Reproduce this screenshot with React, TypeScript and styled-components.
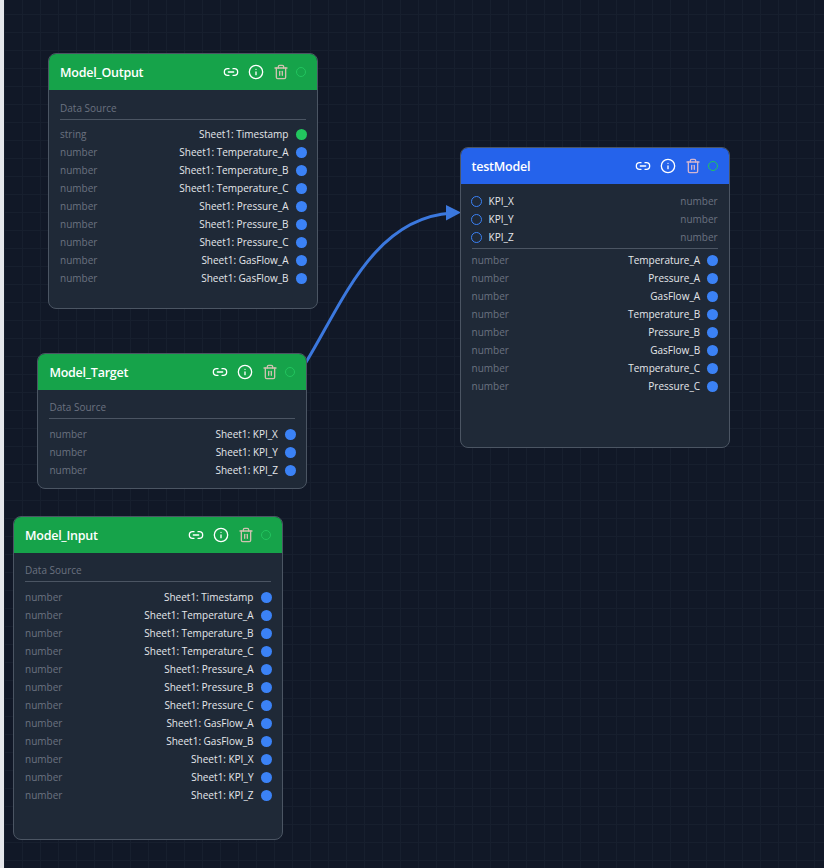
import React from "react";
import styled, { createGlobalStyle } from "styled-components";
import { Link2, Info, Trash2 } from "lucide-react";

const Global = createGlobalStyle`
  html, body { margin: 0; padding: 0; background: #111827; }
  body { font-family: "Open Sans", "Liberation Sans", sans-serif; overflow: hidden; }
`;

const Page = styled.div`
  width: 824px;
  height: 868px;
  display: flex;
  overflow: hidden;
  background: #e5e7eb;
`;

const Canvas = styled.div`
  position: relative;
  margin-left: 4px;
  flex: 1;
  height: 100%;
  background-color: #111827;
  background-image:
    linear-gradient(to right, #171f2e 1px, transparent 1px),
    linear-gradient(to bottom, #171f2e 1px, transparent 1px);
  background-size: 18px 18px;
  background-position: 0px 14px;
`;

const EdgeLayer = styled.svg`
  position: absolute;
  left: -4px;
  top: 0;
  width: 824px;
  height: 868px;
`;

const Node = styled.div<{ $x: number; $y: number; $h: number }>`
  position: absolute;
  left: ${(p) => p.$x - 4}px;
  top: ${(p) => p.$y}px;
  width: 270px;
  height: ${(p) => p.$h}px;
  box-sizing: border-box;
  background: #1f2937;
  border: 1px solid #4b5563;
  border-radius: 8px;
  overflow: hidden;
`;

const Header = styled.div<{ $color: string }>`
  height: 36px;
  background: ${(p) => p.$color};
  display: flex;
  align-items: center;
  padding: 0 11px;
  color: #fff;
`;

const Title = styled.div`
  flex: 1;
  font-size: 12.5px;
  font-weight: 600;
  letter-spacing: -0.25px;
  white-space: nowrap;
`;

const Tools = styled.div`
  display: flex;
  align-items: center;
  gap: 9px;
`;

const TrashWrap = styled.span`
  display: flex;
  color: #fecaca;
  opacity: 0.8;
`;

const Status = styled.span`
  width: 10px;
  height: 10px;
  box-sizing: border-box;
  margin-left: -2px;
  border-radius: 50%;
  border: 1px solid #22c55e;
`;

const Body = styled.div<{ $top?: number }>`
  padding: ${(p) => p.$top ?? 9}px 11px 9px;
`;

const SectionLabel = styled.div<{ $raised?: boolean }>`
  height: 18px;
  line-height: 18px;
  font-size: 10px;
  color: #6b7280;
  margin-top: ${(p) => (p.$raised ? "-1px" : "0")};
`;

const Divider = styled.div<{ $gap: number }>`
  height: 1px;
  background: #4b5563;
  margin: 2px 0 ${(p) => p.$gap}px;
`;

const Row = styled.div`
  height: 18px;
  display: flex;
  align-items: center;
  font-size: 10px;
`;

const TypeText = styled.span`
  color: #6b7280;
`;

const NameText = styled.span`
  flex: 1;
  text-align: right;
  color: #e5e7eb;
  margin-right: 7px;
`;

const InputName = styled.span`
  flex: 1;
  color: #e5e7eb;
  margin-left: 7px;
`;

const Dot = styled.span<{ $color: string }>`
  flex: 0 0 11px;
  height: 11px;
  margin-right: -0.5px;
  border-radius: 50%;
  background: ${(p) => p.$color};
`;

const Ring = styled.span`
  width: 11px;
  height: 11px;
  margin-left: -1px;
  box-sizing: border-box;
  border-radius: 50%;
  border: 1px solid #3b82f6;
`;

const BLUE = "#3b82f6";
const GREEN = "#22c55e";

type NodeProps = {
  title: string;
  color: string;
  x: number;
  y: number;
  h: number;
  top?: number;
  children: React.ReactNode;
};

function GraphNode({ title, color, x, y, h, top, children }: NodeProps) {
  return (
    <Node $x={x} $y={y} $h={h}>
      <Header $color={color}>
        <Title>{title}</Title>
        <Tools>
          <Link2 size={16} strokeWidth={2} />
          <Info size={16} strokeWidth={2} />
          <TrashWrap>
            <Trash2 size={16} strokeWidth={2} />
          </TrashWrap>
          <Status />
        </Tools>
      </Header>
      <Body $top={top}>{children}</Body>
    </Node>
  );
}

function OutRow({ type = "number", name, dot = BLUE }: { type?: string; name: string; dot?: string }) {
  return (
    <Row>
      <TypeText>{type}</TypeText>
      <NameText>{name}</NameText>
      <Dot $color={dot} />
    </Row>
  );
}

function InRow({ name }: { name: string }) {
  return (
    <Row>
      <Ring />
      <InputName>{name}</InputName>
      <TypeText>number</TypeText>
    </Row>
  );
}

function Source({ names }: { names: string[] }) {
  return (
    <>
      <SectionLabel $raised>Data Source</SectionLabel>
      <Divider $gap={6} />
      {names.map((n) => (
        <OutRow key={n} name={n} />
      ))}
    </>
  );
}

const sensors = [
  "Sheet1: Temperature_A",
  "Sheet1: Temperature_B",
  "Sheet1: Temperature_C",
  "Sheet1: Pressure_A",
  "Sheet1: Pressure_B",
  "Sheet1: Pressure_C",
  "Sheet1: GasFlow_A",
  "Sheet1: GasFlow_B",
];
const kpis = ["Sheet1: KPI_X", "Sheet1: KPI_Y", "Sheet1: KPI_Z"];
const modelCols = [
  "Temperature_A",
  "Pressure_A",
  "GasFlow_A",
  "Temperature_B",
  "Pressure_B",
  "GasFlow_B",
  "Temperature_C",
  "Pressure_C",
];

export default function App() {
  return (
    <Page>
      <Global />
      <Canvas>
        <EdgeLayer viewBox="0 0 824 868">
          <path d="M300 372 C 340 310, 370 218, 452 213" fill="none" stroke="#3b78de" strokeWidth={3} />
          <polygon points="446,205 461,212.5 446,220.5" fill="#3b78de" />
        </EdgeLayer>
        <GraphNode title="Model_Output" color="#16a34a" x={48} y={53} h={256}>
          <SectionLabel>Data Source</SectionLabel>
          <Divider $gap={5} />
          <OutRow type="string" name="Sheet1: Timestamp" dot={GREEN} />
          {sensors.map((n) => (
            <OutRow key={n} name={n} />
          ))}
        </GraphNode>
        <GraphNode title="Model_Target" color="#16a34a" x={37.4} y={353} h={136}>
          <Source names={kpis} />
        </GraphNode>
        <GraphNode title="Model_Input" color="#16a34a" x={13} y={516} h={324}>
          <Source names={["Sheet1: Timestamp", ...sensors, ...kpis]} />
        </GraphNode>
        <GraphNode title="testModel" color="#2563eb" x={459.6} y={147} h={301} top={8}>
          <InRow name="KPI_X" />
          <InRow name="KPI_Y" />
          <InRow name="KPI_Z" />
          <Divider $gap={2} />
          {modelCols.map((n) => (
            <OutRow key={n} name={n} />
          ))}
        </GraphNode>
      </Canvas>
    </Page>
  );
}
